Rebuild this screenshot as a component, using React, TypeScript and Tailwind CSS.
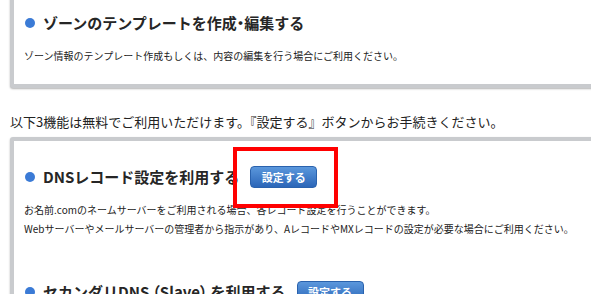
import * as React from "react";

const FONT = "font-['Noto_Sans_CJK_JP','Noto_Sans',sans-serif]";

function Dot() {
  return <span className="ml-[1px] inline-block h-[10px] w-[10px] shrink-0 rounded-full bg-[#3b7bd6]" />;
}

function SetupButton() {
  return (
    <button
      type="button"
      className="flex h-[22px] w-[67px] items-center justify-center rounded-[4px] border border-[#2a62ad] bg-gradient-to-b from-[#5b97dc] to-[#2b66b8] text-[11px] font-bold text-white"
    >
      設定する
    </button>
  );
}

function Heading({ children, withButton }: { children: React.ReactNode; withButton?: boolean }) {
  return (
    <div className="flex h-[24px] items-center">
      <Dot />
      <h2 className="ml-[8px] text-[15px] font-bold leading-[24px] text-[#262626]">{children}</h2>
      {withButton ? (
        <div className="ml-[11px]">
          <SetupButton />
        </div>
      ) : null}
    </div>
  );
}

export default function App() {
  return (
    <div className={`relative h-[294px] w-[591px] overflow-hidden bg-white ${FONT}`}>
      <div className="pl-[10px]">
        {/* zone template card, top edge scrolled off */}
        <div className="-mr-4 -mt-[9px] rounded-[3px] border-4 border-[#c9cbce] bg-white pl-[10px] pt-[16px] pb-[19px] shadow-[0_1px_2px_rgba(0,0,0,0.3)]">
          <Heading>
            ゾーンのテンプレートを作成
            <span className="[font-feature-settings:'palt']">・</span>
            編集する
          </Heading>
          <p className="mt-[12px] text-[10px] leading-[18px] text-[#222]">
            ゾーン情報のテンプレート作成もしくは、内容の編集を行う場合にご利用ください。
          </p>
        </div>

        <p className="mt-[24px] mb-[5px] text-[13px] leading-[20px] text-[#222]">
          以下3機能は無料でご利用いただけます。『設定する』ボタンからお手続きください。
        </p>

        <div className="-mr-4 rounded-[3px] border-4 border-[#c9cbce] bg-white pl-[10px] pt-[24px] shadow-[0_1px_2px_rgba(0,0,0,0.3)]">
          <Heading withButton>DNSレコード設定を利用する</Heading>
          <div className="mt-[11px] text-[10px] leading-[19px] text-[#222]">
            <p>お名前.comのネームサーバーをご利用される場合、各レコード設定を行うことができます。</p>
            <p>Webサーバーやメールサーバーの管理者から指示があり、AレコードやMXレコードの設定が必要な場合にご利用ください。</p>
          </div>
          <div className="mt-[42px]">
            <Heading withButton>
              セカンダリDNS
              <span className="mx-[3px] [font-feature-settings:'palt']">（Slave）</span>
              を利用する
            </Heading>
          </div>
          <div className="h-[40px]" />
        </div>
      </div>

      {/* red annotation box */}
      <div className="absolute left-[233px] top-[147px] h-[61px] w-[105px] border-4 border-[#ff0000]" />
    </div>
  );
}
